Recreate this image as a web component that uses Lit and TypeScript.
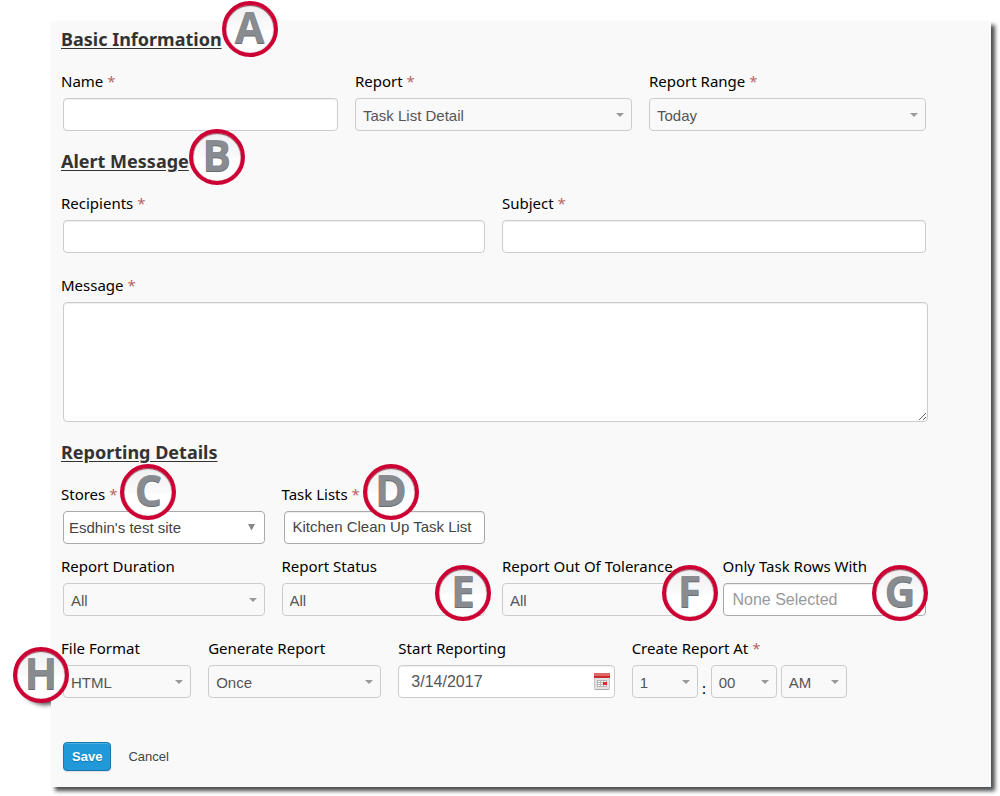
import { LitElement, html, css } from "lit";
import { customElement, property } from "lit/decorators.js";

@customElement("step-badge")
class StepBadge extends LitElement {
  @property() letter = "";

  static styles = css`
    :host {
      position: absolute;
      display: block;
      width: 56px;
      height: 56px;
    }
    /* The shadow lies beneath the panel, so it only shows past the panel's edge. */
    :host::before {
      content: "";
      position: absolute;
      inset: 4px;
      z-index: -1;
      border-radius: 50%;
      box-shadow: 4px 5px 4px 1px #555;
    }
    .disc {
      position: relative;
      display: block;
      box-sizing: border-box;
      height: 56px;
      border: 4px solid #cc0033;
      border-radius: 50%;
      background: linear-gradient(#f0f0f2, #fafafb 50%, #fff 55%);
      box-shadow: inset 0 0 1px #8d0a28, inset 0 1px 1px #8d5a66;
      color: #888c91;
      font: bold 43px/43px "Open Sans", sans-serif;
      text-align: center;
      text-shadow: 0 1px 0 #686c70;
    }
  `;

  render() {
    return html`<span class="disc">${this.letter}</span>`;
  }
}

@customElement("app-root")
class AppRoot extends LitElement {
  static styles = css`
    :host {
      display: flow-root;
      isolation: isolate;
      background: #fff;
    }
    * {
      box-sizing: border-box;
    }
    .panel {
      margin: 21px 9px 9px 51px;
      padding: 6px 65px 16px 10px;
      background: #f9f9f9;
      box-shadow: 4px 4px 4px #4c4e50;
      color: #000;
      font: 15px/20px "Noto Sans", sans-serif;
    }
    .heading {
      margin: 0 0 20px;
      color: #333;
      font-size: 18px;
      font-weight: 700;
      line-height: 24px;
    }
    .title {
      position: relative;
      display: inline-block;
    }
    .title u {
      text-underline-offset: 2px;
    }
    .section {
      display: grid;
      grid-template-columns: minmax(0, 1fr);
      margin-bottom: 18px;
    }
    .row {
      display: grid;
      column-gap: 17px;
    }
    .row + .row {
      margin-top: 22px;
    }
    .row + .row.close {
      margin-top: 12px;
    }
    .cols-1 {
      grid-template-columns: minmax(0, 1fr);
      margin-right: -2px;
    }
    .cols-2 {
      grid-template-columns: repeat(2, minmax(0, 1fr));
    }
    .cols-3 {
      grid-template-columns: repeat(3, minmax(0, 1fr));
    }
    .cols-4 {
      grid-template-columns: repeat(4, minmax(0, 1fr));
    }
    .schedule {
      grid-template-columns: 130fr 173fr 216fr 294fr;
    }
    .field {
      position: relative;
      display: grid;
      grid-template-columns: minmax(0, 1fr);
      row-gap: 7px;
    }
    .name {
      white-space: nowrap;
    }
    .title-anchor {
      position: relative;
      display: inline-block;
    }
    .req {
      color: #b5605c;
      font-family: "Open Sans", sans-serif;
    }
    .field:first-child > .box {
      margin-left: 2px;
    }
    .box {
      display: grid;
      grid-template-columns: minmax(0, 1fr) auto;
      align-items: center;
      min-width: 0;
    }
    .control {
      grid-area: 1 / 1 / 2 / 3;
      width: 100%;
      height: 33px;
      margin: 0;
      padding: 0 8px;
      border: 1px solid #ccc;
      border-radius: 4px;
      background: #fff;
      box-shadow: inset 0 1px 1px #eee;
      color: #555;
      font: 15px/20px "Liberation Sans", sans-serif;
      text-align: left;
      appearance: none;
    }
    select.control {
      padding: 2px 7px 0;
      background: #f9f9f9;
      box-shadow: none;
    }
    .control.strong {
      border-color: #aaa;
      background: #fff;
      color: #444;
    }
    .control.store {
      padding: 0 5px;
    }
    .control.multi {
      padding: 0 8px 2px;
      white-space: nowrap;
    }
    .control.inset {
      padding: 0 9px;
      font-size: 16px;
    }
    .control.date {
      padding: 0 12px;
      font-size: 16px;
    }
    .control::placeholder {
      color: #999;
      opacity: 1;
    }
    textarea.control {
      display: block;
      height: 120px;
      padding: 6px 8px;
      resize: both;
    }
    .arrow {
      grid-area: 1 / 2;
      margin-right: 8px;
      pointer-events: none;
    }
    .arrow.tall {
      margin-right: 9px;
    }
    .shift {
      padding-left: 2px;
    }
    .calendar {
      grid-area: 1 / 2;
      display: block;
      width: 16px;
      height: 18px;
      margin-right: 5px;
      padding: 0;
      border: 0;
      background: none;
    }
    .time {
      display: flex;
      gap: 4px;
      align-items: flex-end;
    }
    .time .box {
      width: 66px;
    }
    .colon {
      width: 5px;
      text-align: center;
    }
    .actions {
      display: flex;
      align-items: center;
      gap: 17px;
      margin-top: 44px;
      padding-left: 2px;
    }
    .save {
      height: 29px;
      padding: 0 8px;
      border: 1px solid #1878ad;
      border-radius: 4px;
      background: #2199d9;
      box-shadow: inset 0 1px 0 #4fb0e3, 0 1px 1px #ddd;
      color: #fff;
      font: bold 13px/20px "Liberation Sans", sans-serif;
      text-shadow: 0 1px 1px #1574a8;
    }
    .cancel {
      color: #444;
      font: 13px/20px "Liberation Sans", sans-serif;
      text-decoration: none;
    }
    .at-a {
      top: -26px;
      left: 100%;
    }
    .at-b {
      top: -20px;
      left: 100%;
    }
    .at-label {
      top: -20px;
      left: calc(100% + 3px);
    }
    .at-e {
      top: 9px;
      right: -6px;
    }
    .at-f {
      top: 9px;
      right: -12px;
    }
    .at-g {
      top: 9px;
      right: -2px;
    }
    .at-h {
      top: 9px;
      left: -48px;
    }
  `;

  private label(id: string, text: string, required = false, badge = "") {
    return html`<label class="name" for=${id}
      ><span class="title-anchor"
        >${text}${required ? html` <span class="req">*</span>` : ""}${badge
          ? html`<step-badge class="at-label" letter=${badge}></step-badge>`
          : ""}</span
      ></label
    >`;
  }

  private select(id: string, value: string, aria = "") {
    return html`<div class="box">
      <select class="control" id=${id} aria-label=${aria || value}>
        <option>${value}</option>
      </select>
      <svg class="arrow" width="8" height="4" viewBox="0 0 8 4" aria-hidden="true">
        <path d="M0 0H8L4 4Z" fill="#999" />
      </svg>
    </div>`;
  }

  private text(id: string) {
    return html`<div class="box"><input class="control" id=${id} type="text" /></div>`;
  }

  render() {
    return html`<form class="panel" @submit=${(e: Event) => e.preventDefault()}>
      <section class="section">
        <h2 class="heading">
          <span class="title"><u>Basic Information</u><step-badge class="at-a" letter="A"></step-badge></span>
        </h2>
        <div class="row cols-3">
          <div class="field">${this.label("name", "Name", true)} ${this.text("name")}</div>
          <div class="field">
            ${this.label("report", "Report", true)} ${this.select("report", "Task List Detail", "Report")}
          </div>
          <div class="field">
            ${this.label("range", "Report Range", true)} ${this.select("range", "Today", "Report Range")}
          </div>
        </div>
      </section>

      <section class="section">
        <h2 class="heading">
          <span class="title"><u>Alert Message</u><step-badge class="at-b" letter="B"></step-badge></span>
        </h2>
        <div class="row cols-2">
          <div class="field">${this.label("recipients", "Recipients", true)} ${this.text("recipients")}</div>
          <div class="field">${this.label("subject", "Subject", true)} ${this.text("subject")}</div>
        </div>
        <div class="row cols-1">
          <div class="field">
            ${this.label("message", "Message", true)}
            <div class="box"><textarea class="control" id="message"></textarea></div>
          </div>
        </div>
      </section>

      <section>
        <h2 class="heading"><span class="title"><u>Reporting Details</u></span></h2>
        <div class="row cols-4">
          <div class="field">
            ${this.label("stores", "Stores", true, "C")}
            <div class="box">
              <select class="control strong store" id="stores">
                <option>Esdhin's test site</option>
              </select>
              <svg class="arrow tall" width="9" height="7" viewBox="0 0 9 7" aria-hidden="true">
                <path d="M1 0H8L4.500 6.500Z" fill="#888" />
              </svg>
            </div>
          </div>
          <div class="field">
            ${this.label("lists", "Task Lists", true, "D")}
            <div class="box shift">
              <button class="control strong multi" id="lists" type="button">Kitchen Clean Up Task List</button>
            </div>
          </div>
        </div>
        <div class="row cols-4 close">
          <div class="field">
            ${this.label("duration", "Report Duration")} ${this.select("duration", "All", "Report Duration")}
          </div>
          <div class="field">
            ${this.label("status", "Report Status")} ${this.select("status", "All", "Report Status")}
            <step-badge class="at-e" letter="E"></step-badge>
          </div>
          <div class="field">
            ${this.label("tolerance", "Report Out Of Tolerance")}
            ${this.select("tolerance", "All", "Report Out Of Tolerance")}
            <step-badge class="at-f" letter="F"></step-badge>
          </div>
          <div class="field">
            ${this.label("rows", "Only Task Rows With")}
            <div class="box">
              <input class="control strong inset" id="rows" type="text" placeholder="None Selected" />
            </div>
            <step-badge class="at-g" letter="G"></step-badge>
          </div>
        </div>
        <div class="row schedule">
          <div class="field">
            ${this.label("format", "File Format")} ${this.select("format", "HTML", "File Format")}
            <step-badge class="at-h" letter="H"></step-badge>
          </div>
          <div class="field">
            ${this.label("generate", "Generate Report")} ${this.select("generate", "Once", "Generate Report")}
          </div>
          <div class="field">
            ${this.label("start", "Start Reporting")}
            <div class="box">
              <input class="control date" id="start" type="text" .value=${"3/14/2017"} />
              <button class="calendar" type="button" aria-label="Choose date">
                <svg width="16" height="18" viewBox="0 0 16 18" aria-hidden="true">
                  <rect x="0.500" y="1.500" width="15" height="15" rx="1" fill="#e2e2e2" stroke="#c4c4c4" />
                  <rect x="0" y="0" width="16" height="3" fill="#e06666" />
                  <rect x="0" y="3" width="16" height="2" fill="#cc2a2a" />
                  <rect x="3" y="7" width="10" height="7" fill="#b4b4b4" />
                  <path
                    d="M4 8h2v1H4zM7 8h2v1H7zM10 8h2v1h-2zM4 10h2v1H4zM7 10h2v1H7zM4 12h2v1H4zM7 12h2v1H7zM10 12h2v1h-2z"
                    fill="#fff"
                  />
                  <rect x="9" y="9" width="4" height="3" fill="#d92b2b" />
                  <path d="M1 16.500h14" stroke="#aaa" />
                </svg>
              </button>
            </div>
          </div>
          <div class="field">
            ${this.label("hour", "Create Report At", true)}
            <div class="time">
              ${this.select("hour", "1", "Hour")}
              <span class="colon">:</span>
              ${this.select("minute", "00", "Minute")} ${this.select("half", "AM", "AM or PM")}
            </div>
          </div>
        </div>
      </section>

      <div class="actions">
        <button class="save" type="submit">Save</button>
        <a class="cancel" href="#">Cancel</a>
      </div>
    </form>`;
  }
}
